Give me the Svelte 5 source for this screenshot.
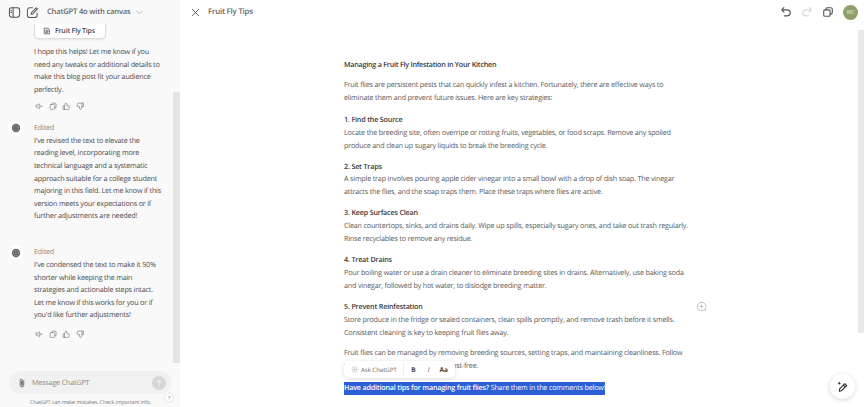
<script>
  const sections = [
    { head: '1. Find the Source', lines: ['Locate the breeding site, often overripe or rotting fruits, vegetables, or food scraps. Remove any spoiled', 'produce and clean up sugary liquids to break the breeding cycle.'] },
    { head: '2. Set Traps', lines: ['A simple trap involves pouring apple cider vinegar into a small bowl with a drop of dish soap. The vinegar', 'attracts the flies, and the soap traps them. Place these traps where flies are active.'] },
    { head: '3. Keep Surfaces Clean', lines: ['Clean countertops, sinks, and drains daily. Wipe up spills, especially sugary ones, and take out trash regularly.', 'Rinse recyclables to remove any residue.'] },
    { head: '4. Treat Drains', lines: ['Pour boiling water or use a drain cleaner to eliminate breeding sites in drains. Alternatively, use baking soda', 'and vinegar, followed by hot water, to dislodge breeding matter.'] },
    { head: '5. Prevent Reinfestation', lines: ['Store produce in the fridge or sealed containers, clean spills promptly, and remove trash before it smells.', 'Consistent cleaning is key to keeping fruit flies away.'] }
  ];
</script>

{#snippet actions()}
  <div class="actions">
    <svg viewBox="0 0 12 12"><path d="M1.5 4.5v3h2l2.500 2V2.500l-2.500 2zM8 4.500c.8.800.8 2.200 0 3M9.500 5.500v1"/></svg>
    <svg viewBox="0 0 12 12"><rect x="1.500" y="3.500" width="6.500" height="7" rx="1.500"/><path d="M4 3.500V3a1.500 1.500 0 0 1 1.500-1.500h3A1.500 1.500 0 0 1 10 3v4a1.500 1.500 0 0 1-2 1.400"/></svg>
    <svg viewBox="0 0 12 12"><path d="M3.500 5.500v5h5.300c.6 0 1-.4 1.100-.9l.6-3c.1-.6-.4-1.100-1-1.100H7V3c0-.8-.6-1.500-1.300-1.500zM3.500 5.500h-2v5h2"/></svg>
    <svg viewBox="0 0 12 12"><path d="M8.500 6.500v-5H3.200c-.6 0-1 .4-1.100.9l-.6 3c-.1.600.4 1.100 1 1.100H5V9c0 .8.600 1.500 1.300 1.500zM8.500 6.500h2v-5h-2"/></svg>
  </div>
{/snippet}

{#snippet avatar()}
  <div class="bot">
    <svg viewBox="0 0 12 12"><circle cx="6" cy="6" r="5" fill="#5c5c5c"/><circle cx="6" cy="6" r="3.400" fill="none" stroke="#bbb" stroke-width=".8" stroke-dasharray="1.200 .9"/><circle cx="6" cy="6" r="1.300" fill="#888"/></svg>
  </div>
{/snippet}

<div class="page">
  <aside class="side">
    <header class="side-head">
      <svg class="ico" viewBox="0 0 14 14"><rect x="1.500" y="2" width="11" height="10" rx="2.500"/><path d="M5.500 2v10M3 5h1M3 7h1"/></svg>
      <svg class="ico" viewBox="0 0 14 14"><path d="M7 2H4a2.500 2.500 0 0 0-2.500 2.500V10A2.500 2.500 0 0 0 4 12.500h5.500A2.500 2.500 0 0 0 12 10V7.500M5.500 9l.4-2L11 1.900l1.300 1.300L7.300 8.500z"/></svg>
      <span class="model">ChatGPT 4o with canvas</span>
      <svg class="chev" viewBox="0 0 8 8"><path d="M1 2.500l3 3 3-3"/></svg>
    </header>
    <div class="chat">
      <div class="thread">
        <div class="doc-chip">
          <svg viewBox="0 0 10 10"><path d="M2 1.500h4.500L8 3v5.500H2zM3.500 4h3M3.500 5.500h3M3.500 7h2"/></svg>
          <span>Fruit Fly Tips</span>
        </div>
        <p class="msg first">I hope this helps! Let me know if you<br>need any tweaks or additional details to<br>make this blog post fit your audience<br>perfectly.</p>
        {@render actions()}
        <div class="turn t2">
          {@render avatar()}
          <div>
            <div class="edited">Edited</div>
            <p class="msg">I've revised the text to elevate the<br>reading level, incorporating more<br>technical language and a systematic<br>approach suitable for a college student<br>majoring in this field. Let me know if this<br>version meets your expectations or if<br>further adjustments are needed!</p>
          </div>
        </div>
        <div class="turn t3">
          {@render avatar()}
          <div>
            <div class="edited">Edited</div>
            <p class="msg">I've condensed the text to make it 50%<br>shorter while keeping the main<br>strategies and actionable steps intact.<br>Let me know if this works for you or if<br>you'd like further adjustments!</p>
          </div>
        </div>
        {@render actions()}
      </div>
      <div class="track"><div class="thumb"></div></div>
    </div>
    <div class="composer">
      <svg class="clip" viewBox="0 0 10 14"><path d="M7.500 4v6a2.500 2.500 0 0 1-5 0V3.500a1.700 1.700 0 0 1 3.400 0V9.500a.8.800 0 0 1-1.600 0V4.500"/></svg>
      <span>Message ChatGPT</span>
      <div class="send"><svg viewBox="0 0 10 10"><path d="M5 8.500v-7M2 4.500l3-3 3 3"/></svg></div>
    </div>
    <div class="disclaimer">ChatGPT can make mistakes. Check important info.</div>
    <div class="help">?</div>
  </aside>

  <main class="canvas">
    <header class="top">
      <svg class="close" viewBox="0 0 10 10"><path d="M1.500 1.500l7 7M8.500 1.500l-7 7"/></svg>
      <span class="doc-name">Fruit Fly Tips</span>
      <div class="top-right">
        <svg class="tool" viewBox="0 0 14 14"><path d="M4.500 2L2 4.500 4.500 7M2 4.500h6.500a3 3 0 0 1 0 7H5"/></svg>
        <svg class="tool off" viewBox="0 0 14 14"><path d="M9.500 2L12 4.500 9.500 7M12 4.500H5.500a3 3 0 0 0 0 7H9"/></svg>
        <svg class="tool" viewBox="0 0 14 14"><rect x="2" y="4.500" width="7.500" height="7.500" rx="1.500"/><path d="M4.500 4.500V3.500A1.500 1.500 0 0 1 6 2h4.500A1.500 1.500 0 0 1 12 3.500V8a1.500 1.500 0 0 1-1.500 1.500h-1"/></svg>
        <div class="wc">WC</div>
      </div>
    </header>
    <article class="doc">
      <h1>Managing a Fruit Fly Infestation in Your Kitchen</h1>
      <p class="intro">Fruit flies are persistent pests that can quickly infest a kitchen. Fortunately, there are effective ways to<br>eliminate them and prevent future issues. Here are key strategies:</p>
      {#each sections as s}
        <p><b>{s.head}</b><br>{s.lines[0]}<br>{s.lines[1]}</p>
      {/each}
      <p>Fruit flies can be managed by removing breeding sources, setting traps, and maintaining cleanliness. Follow<br><span class="under">these steps to keep your kitchen pest-free.</span></p>
      <p class="sel"><mark><b>Have additional tips for managing fruit flies?</b> Share them in the comments below!</mark></p>
    </article>

    <div class="bubble">
      <span class="ask"><svg viewBox="0 0 10 10"><circle cx="5" cy="5" r="3.700"/><path d="M5 3.500v3M3.500 5h3"/></svg>Ask ChatGPT</span>
      <i class="sep"></i>
      <b class="fmt">B</b>
      <em class="fmt">I</em>
      <b class="fmt aa">Aa</b>
    </div>
    <svg class="comment" viewBox="0 0 12 12"><path d="M6 1.500a4.500 4.500 0 1 0 2.700 8.100l2 .6-.5-2A4.500 4.500 0 0 0 6 1.500zM6 4.500v3M4.500 6h3"/></svg>
    <div class="fab">
      <svg viewBox="0 0 14 14"><path d="M3.500 12l.5-2.500 5.500-5.500 2 2-5.500 5.500zM8 5.500l2 2"/><path class="star" d="M3.500 1.500l.6 1.400 1.400.6-1.400.6-.6 1.400-.6-1.400-1.400-.6 1.400-.6z"/></svg>
    </div>
    <div class="vtrack"><div class="vthumb"></div></div>
  </main>
</div>

<style>
  :global(body) {
    margin: 0;
    background: #fff;
  }
  .page {
    display: flex;
    width: 864px;
    height: 407px;
    overflow: hidden;
    font-family: "Open Sans", "Noto Sans", sans-serif;
    text-rendering: geometricPrecision;
    letter-spacing: -0.19px;
    color: #333;
  }
  svg {
    fill: none;
    stroke: currentColor;
    stroke-linecap: round;
    stroke-linejoin: round;
  }

  .side {
    position: relative;
    width: 180px;
    flex: none;
    display: flex;
    flex-direction: column;
    background: #f9f9f9;
  }
  .side-head {
    height: 24px;
    flex: none;
    display: flex;
    align-items: center;
    padding-left: 8px;
    color: #666;
  }
  .ico {
    width: 13px;
    height: 13px;
    stroke-width: 1.100;
    color: #555;
    margin-right: 5px;
  }
  .model {
    margin-left: 3px;
    font-size: 7.600px;
    font-weight: 600;
    color: #666;
  }
  .chev {
    width: 7px;
    height: 7px;
    margin-left: 5px;
    color: #aaa;
  }

  .chat {
    flex: 1;
    min-height: 0;
    display: flex;
    overflow: hidden;
  }
  .thread {
    flex: 1;
    min-width: 0;
  }
  .doc-chip {
    display: flex;
    align-items: center;
    gap: 4px;
    box-sizing: border-box;
    width: 72px;
    height: 15px;
    margin-left: 34px;
    padding-left: 8px;
    background: #fff;
    border: 1px solid #ddd;
    border-top: none;
    border-radius: 0 0 5px 5px;
    box-shadow: 0 1px 2px rgba(0, 0, 0, 0.08);
    font-size: 7px;
    font-weight: 600;
    color: #444;
  }
  .doc-chip svg {
    width: 8px;
    height: 8px;
    stroke-width: 0.900;
  }
  .msg {
    margin: 0;
    font-size: 7.200px;
    line-height: 12.600px;
    color: #4a4a4a;
    white-space: nowrap;
  }
  .first {
    margin: 7px 0 0 34px;
  }
  .actions {
    display: flex;
    gap: 5px;
    margin: 6px 0 0 35px;
    color: #777;
  }
  .actions svg {
    width: 8.500px;
    height: 8.500px;
    stroke-width: 0.900;
  }
  .turn {
    display: flex;
    margin-left: 8px;
  }
  .t2 {
    margin-top: 10px;
  }
  .t3 {
    margin-top: 22px;
  }
  .t3 + .actions {
    margin-top: 8px;
  }
  .bot {
    width: 15px;
    height: 15px;
    flex: none;
    display: flex;
    align-items: center;
    justify-content: center;
    margin-right: 11px;
    border-radius: 50%;
    background: #fff;
  }
  .bot svg {
    width: 10px;
    height: 10px;
    stroke: none;
  }
  .edited {
    font-size: 7.200px;
    line-height: 14px;
    color: #888;
  }

  .track {
    width: 7px;
    flex: none;
    background: #f9f9f9;
  }
  .thumb {
    height: 271px;
    margin-top: 68px;
    background: #e3e3e3;
  }

  .composer {
    display: flex;
    align-items: center;
    flex: none;
    height: 23px;
    margin: 0 9px;
    padding: 0 0 0 9px;
    border-radius: 12px;
    background: #f1f1f1;
    font-size: 7.200px;
    color: #8a8a8a;
  }
  .clip {
    width: 8px;
    height: 10px;
    margin-right: 6px;
    color: #444;
    stroke-width: 1;
  }
  .send {
    width: 14px;
    height: 14px;
    margin-left: auto;
    margin-right: 5px;
    display: flex;
    align-items: center;
    justify-content: center;
    border-radius: 50%;
    background: #d7d7d7;
    color: #f3f3f3;
  }
  .send svg {
    width: 8px;
    height: 8px;
    stroke-width: 1.200;
  }
  .disclaimer {
    flex: none;
    height: 13px;
    line-height: 17px;
    padding-left: 30px;
    font-size: 5.300px;
    letter-spacing: -0.1px;
    color: #777;
    white-space: nowrap;
  }
  .help {
    position: absolute;
    left: 164px;
    top: 393px;
    width: 10px;
    height: 10px;
    box-sizing: border-box;
    border: 1px solid #e5e5e5;
    border-radius: 50%;
    background: #fff;
    font-size: 5.500px;
    line-height: 8px;
    text-align: center;
    color: #777;
  }

  .canvas {
    position: relative;
    flex: 1;
    min-width: 0;
    background: #fff;
  }
  .top {
    height: 24px;
    display: flex;
    align-items: center;
    padding-left: 11px;
  }
  .close {
    width: 9px;
    height: 9px;
    color: #555;
    stroke-width: 1;
  }
  .doc-name {
    margin-left: 8px;
    font-size: 7.800px;
    font-weight: 600;
    color: #666;
  }
  .top-right {
    margin-left: auto;
    margin-right: 6px;
    display: flex;
    align-items: center;
    gap: 9px;
  }
  .tool {
    width: 12px;
    height: 12px;
    color: #555;
    stroke-width: 1.300;
  }
  .tool.off {
    color: #d8d8d8;
  }
  .wc {
    width: 15px;
    height: 15px;
    border-radius: 50%;
    background: #8f9f6a;
    color: #e8ecdc;
    font-size: 5.500px;
    line-height: 15px;
    text-align: center;
  }

  .doc {
    padding: 35px 0 0 164px;
    font-size: 7.200px;
    line-height: 12.900px;
    color: #585858;
    white-space: nowrap;
  }
  .doc h1 {
    margin: 0 0 7px;
    font-size: 7.200px;
    line-height: 13px;
    font-weight: 600;
    letter-spacing: -0.25px;
    color: #3a3a3a;
  }
  .doc p {
    margin: 0 0 8px;
  }
  .doc p.intro {
    margin-bottom: 9px;
  }
  .doc b {
    font-weight: 600;
    color: #3a3a3a;
  }
  .doc p.sel {
    margin-top: 9px;
  }
  mark {
    display: inline-block;
    padding: 0;
    background: #2a5fd6;
    color: #fff;
  }
  .doc mark b {
    color: #fff;
  }

  .bubble {
    position: absolute;
    left: 164px;
    top: 361px;
    width: 111px;
    height: 17px;
    display: flex;
    align-items: center;
    box-sizing: border-box;
    padding-left: 7px;
    background: #fff;
    border-radius: 5px;
    box-shadow: 0 1px 5px rgba(0, 0, 0, 0.14);
    font-size: 6px;
    letter-spacing: 0;
    color: #666;
    white-space: nowrap;
  }
  .ask {
    display: flex;
    align-items: center;
    gap: 3px;
  }
  .ask svg {
    width: 7px;
    height: 7px;
    color: #aaa;
    stroke-width: 0.700;
  }
  .sep {
    width: 1px;
    height: 13px;
    margin: 0 6px 0 6px;
    background: #eee;
  }
  .fmt {
    width: 9px;
    margin-right: 7px;
    text-align: center;
    color: #444;
    font-size: 6.500px;
  }
  .comment {
    position: absolute;
    left: 516px;
    top: 301px;
    width: 11px;
    height: 11px;
    color: #aaa;
    stroke-width: 0.800;
  }
  .fab {
    position: absolute;
    left: 650px;
    top: 374px;
    width: 25px;
    height: 25px;
    display: flex;
    align-items: center;
    justify-content: center;
    border-radius: 50%;
    background: #fff;
    box-shadow: 0 1px 5px rgba(0, 0, 0, 0.16);
  }
  .fab svg {
    width: 13px;
    height: 13px;
    color: #222;
    stroke-width: 1.100;
  }
  .fab .star {
    fill: #222;
    stroke: none;
  }
  .vtrack {
    position: absolute;
    right: 0;
    top: 30px;
    width: 6px;
    height: 303px;
  }
  .vthumb {
    height: 100%;
    background: #e8e8e8;
  }
</style>
